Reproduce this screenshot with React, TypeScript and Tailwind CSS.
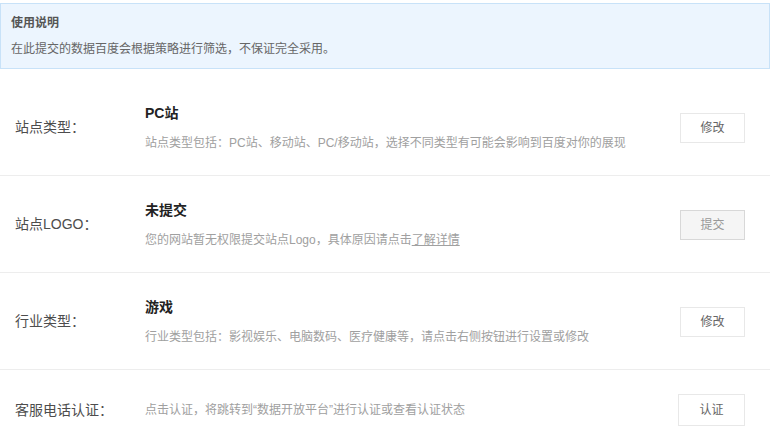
import React from 'react';

const font = { fontFamily: '"Liberation Sans", "Noto Sans CJK SC", sans-serif' };

type Row = {
  label: string;
  title?: string;
  desc: React.ReactNode;
  action: string;
  disabled?: boolean;
};

const rows: Row[] = [
  {
    label: '站点类型：',
    title: 'PC站',
    desc: '站点类型包括：PC站、移动站、PC/移动站，选择不同类型有可能会影响到百度对你的展现',
    action: '修改',
  },
  {
    label: '站点LOGO：',
    title: '未提交',
    desc: (
      <>
        您的网站暂无权限提交站点Logo，具体原因请点击<span className="underline">了解详情</span>
      </>
    ),
    action: '提交',
    disabled: true,
  },
  {
    label: '行业类型：',
    title: '游戏',
    desc: '行业类型包括：影视娱乐、电脑数码、医疗健康等，请点击右侧按钮进行设置或修改',
    action: '修改',
  },
  {
    label: '客服电话认证：',
    desc: '点击认证，将跳转到“数据开放平台”进行认证或查看认证状态',
    action: '认证',
  },
];

const App: React.FC = () => {
  return (
    <div className="w-[770px] h-[445px] overflow-hidden bg-white" style={font}>
      {/* notice box */}
      <div className="mt-[3px] mb-[10px] border border-[#c8e2f8] bg-[#ecf5fe] pl-[10px] pt-[9px] pb-[9px]">
        <div className="text-[12px] leading-[20px] font-bold text-[#555]">使用说明</div>
        <div className="mt-[6px] text-[12px] leading-[20px] text-[#666]">
          在此提交的数据百度会根据策略进行筛选，不保证完全采用。
        </div>
      </div>

      {rows.map((r, i) => (
        <div
          key={i}
          className="flex items-center border-b border-[#ededed] pt-[24px] pb-[23px]"
        >
          <div className="w-[145px] shrink-0 pl-[15px] text-[14px] text-[#4d4d4d]">{r.label}</div>
          <div className="flex-1">
            {r.title && (
              <div className="text-[14px] leading-[20px] font-bold text-[#222]">{r.title}</div>
            )}
            <div
              className={
                r.title
                  ? 'mt-[11px] text-[12px] leading-[18px] text-[#a0a0a0]'
                  : 'text-[12px] leading-[18px] text-[#a0a0a0]'
              }
            >
              {r.desc}
            </div>
          </div>
          <div className="mr-[25px] shrink-0">
            {r.disabled ? (
              <div className="flex h-[30px] w-[65px] items-center justify-center border border-[#d8d8d8] bg-[#f5f5f5] text-[12px] text-[#999]">
                {r.action}
              </div>
            ) : (
              <div
                className={
                  r.title
                    ? 'flex h-[30px] w-[65px] items-center justify-center border border-[#e8e8e8] bg-white text-[12px] text-[#666]'
                    : 'flex h-[32px] w-[67px] items-center justify-center border border-[#e8e8e8] bg-white text-[12px] text-[#666]'
                }
              >
                {r.action}
              </div>
            )}
          </div>
        </div>
      ))}
    </div>
  );
};

export default App;
